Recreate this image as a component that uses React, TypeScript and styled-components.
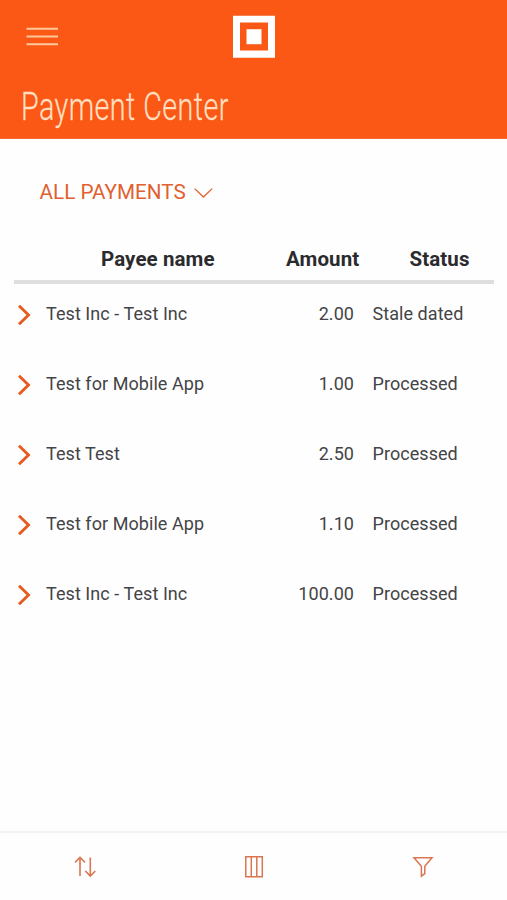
import React from "react";
import styled, { createGlobalStyle } from "styled-components";

const GlobalStyle = createGlobalStyle`
  * { box-sizing: border-box; }
  body { margin: 0; background: #fefefe; font-family: Roboto, sans-serif; }
  svg { display: block; fill: none; }
`;

const Page = styled.div`
  display: flex;
  flex-direction: column;
  height: 900px;
  background: #fefefe;
`;

const Header = styled.header`
  height: 139px;
  flex: none;
  padding-top: 15px;
  background: #fa5814;
  border-bottom: 1px solid #ee6a35;
`;

const TopBar = styled.div`
  display: grid;
  grid-template-columns: 1fr auto 1fr;
  padding-left: 26px;
`;

const MenuButton = styled.button`
  justify-self: start;
  margin: 11px 0 0;
  padding: 0;
  border: 0;
  background: none;
  height: 22px;
`;

const Logo = styled.div`
  transform: translateX(-13px);
`;

const Title = styled.h1`
  display: inline-block;
  margin: 26px 0 0 21px;
  font-size: 38px;
  line-height: 46px;
  font-weight: 300;
  letter-spacing: 0.6px;
  color: #ffdfc0;
  -webkit-text-stroke: 0.3px #ffdfc0;
  white-space: nowrap;
  transform: scaleX(0.755);
  transform-origin: left center;
`;

const Filter = styled.button`
  display: flex;
  align-items: center;
  align-self: flex-start;
  gap: 8px;
  margin: 41px 0 0 39.5px;
  padding: 0;
  height: 24px;
  border: 0;
  background: none;
  color: #e0602f;
  font: 400 20.7px/24px Roboto, sans-serif;
`;

const Table = styled.div`
  margin: 30px 13px 0 14px;
`;

const HeadRow = styled.div`
  display: grid;
  grid-template-columns: 245px 101px 1fr;
  height: 50px;
  border-bottom: 4px solid #dedede;
  color: #2b2b2d;
  font-weight: 700;
  font-size: 20.5px;
  line-height: 50px;
  letter-spacing: 0.1px;
`;

const HeadCell = styled.span<{ $inset: number }>`
  padding-left: ${(p) => p.$inset}px;
  white-space: nowrap;
`;

const Row = styled.div`
  display: grid;
  grid-template-columns: 32px 220px 88px 1fr;
  align-items: center;
  height: 70px;
  color: #444446;
  font-size: 18px;
  line-height: 22px;
  letter-spacing: 0.06px;
`;

const Rows = styled.div`
  margin-top: -5px;
`;

const Amount = styled.span`
  text-align: right;
`;

const Status = styled.span`
  padding-left: 18.5px;
`;

const Chevron = styled.svg`
  margin: 2px 0 0 3px;
`;

const BottomBar = styled.nav`
  display: grid;
  grid-template-columns: repeat(3, 1fr);
  place-items: center;
  height: 69px;
  margin-top: auto;
  padding-top: 1px;
  border-top: 2px solid #f3f3f3;
`;

const Tool = styled.button`
  padding: 0;
  border: 0;
  background: none;
  color: #d97650;
`;

const payments = [
  { payee: "Test Inc - Test Inc", amount: "2.00", status: "Stale dated" },
  { payee: "Test for Mobile App", amount: "1.00", status: "Processed" },
  { payee: "Test Test", amount: "2.50", status: "Processed" },
  { payee: "Test for Mobile App", amount: "1.10", status: "Processed" },
  { payee: "Test Inc - Test Inc", amount: "100.00", status: "Processed" },
];

export default function App() {
  return (
    <Page>
      <GlobalStyle />
      <Header>
        <TopBar>
          <MenuButton aria-label="Menu">
            <svg width="32" height="22" stroke="#ffc89c" strokeWidth="2">
              <path d="M.5 2.7H32M.5 10.5H32M.5 18.3H32" />
            </svg>
          </MenuButton>
          <Logo>
            <svg width="42" height="43">
              <path fill="#fff" fillRule="evenodd" d="M0 .7h42v42H0zM7 7.5v28h28v-28z" />
              <path fill="#fff" d="M13.5 14.2h15v15h-15z" />
            </svg>
          </Logo>
        </TopBar>
        <Title>Payment Center</Title>
      </Header>
      <Filter>
        ALL PAYMENTS
        <svg width="19" height="12" stroke="currentColor" strokeWidth="1.3">
          <path d="M.7 2.6 9.4 11 18.2 2.6" />
        </svg>
      </Filter>
      <Table>
        <HeadRow>
          <HeadCell $inset={87}>Payee name</HeadCell>
          <HeadCell $inset={27}>Amount</HeadCell>
          <HeadCell $inset={49.5}>Status</HeadCell>
        </HeadRow>
        <Rows>
          {payments.map((p, i) => (
            <Row key={i}>
              <Chevron width="15" height="22" stroke="#e85a20" strokeWidth="2.9">
                <path d="M2 1.8 11.5 11 2 20.2" />
              </Chevron>
              <span>{p.payee}</span>
              <Amount>{p.amount}</Amount>
              <Status>{p.status}</Status>
            </Row>
          ))}
        </Rows>
      </Table>
      <BottomBar>
        <Tool aria-label="Sort">
          <svg width="24" height="24" viewBox="0 0 24 24" stroke="currentColor" strokeWidth="1.6">
            <path d="M7 21V2.5M2 7.5l5-5 5 5M17.3 2.5V21M12.3 16l5 5 5-5" />
          </svg>
        </Tool>
        <Tool aria-label="Columns">
          <svg width="20" height="24" stroke="currentColor" strokeWidth="1.5">
            <path d="M1.8 1.8h16.5v20H1.8zM7.3 2v20M12.8 2v20" />
          </svg>
        </Tool>
        <Tool aria-label="Filter">
          <svg width="22" height="24" stroke="currentColor" strokeWidth="1.5">
            <path d="M2 2.7h18l-7.2 8.6v7.4l-3.4 2.5v-9.9z" />
          </svg>
        </Tool>
      </BottomBar>
    </Page>
  );
}
